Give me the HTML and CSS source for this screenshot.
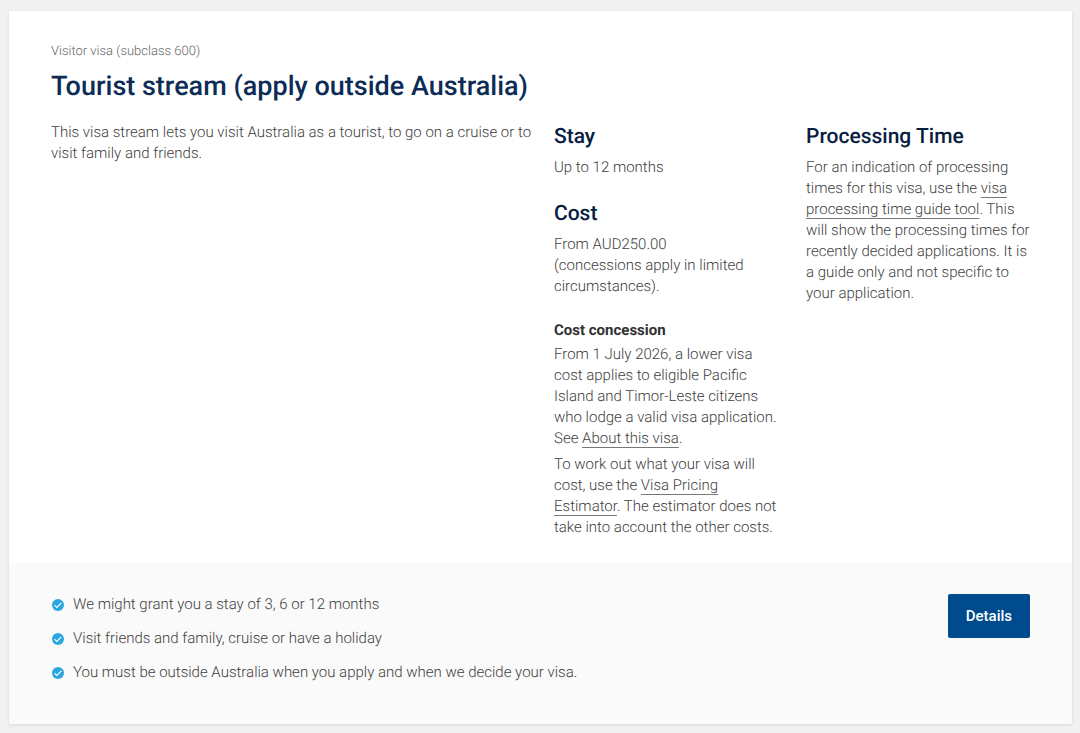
FILE: index.html
```html
<!DOCTYPE html>
<html lang="en">
<head>
    <meta charset="UTF-8">
    <meta name="viewport" content="width=device-width, initial-scale=1.0">
    <title>Visitor visa (subclass 600)</title>
    <link rel="stylesheet" href="styles.css">
</head>
<body>
    <!-- Shared tick icon -->
    <svg class="sprite" width="0" height="0" aria-hidden="true">
        <symbol id="tick" viewBox="0 0 12 12">
            <circle cx="6" cy="6" r="6" fill="#2ba6de"/>
            <path d="M2.5 6.2 L4.8 8.4 L9.4 3.8" fill="none" stroke="#fff" stroke-width="1.1"/>
        </symbol>
    </svg>

    <main class="visa-card">
        <div class="visa-main">
            <p class="visa-type">Visitor visa (subclass 600)</p>
            <h1>Tourist stream (apply outside Australia)</h1>

            <div class="visa-columns">
                <p class="visa-intro">This visa stream lets you visit Australia as a tourist, to go on a cruise or to visit family and friends.</p>

                <div class="visa-info">
                    <section>
                        <h2>Stay</h2>
                        <p>Up to 12 months</p>
                    </section>
                    <section>
                        <h2>Cost</h2>
                        <p>From AUD250.00<br>(concessions apply in limited circumstances).</p>
                        <h3>Cost concession</h3>
                        <p>From 1 July 2026, a lower visa cost applies to eligible Pacific Island and Timor-Leste citizens who lodge a valid visa application. See <a href="#">About this visa</a>.</p>
                        <p>To work out what your visa will cost, use the <a href="#">Visa Pricing Estimator</a>. The estimator does not take into account the other costs.</p>
                    </section>
                </div>

                <div class="visa-info">
                    <section>
                        <h2>Processing Time</h2>
                        <p>For an indication of processing times for this visa, use the <a href="#">visa processing time guide tool</a>. This will show the processing times for recently decided applications. It is a guide only and not specific to your application.</p>
                    </section>
                </div>
            </div>
        </div>

        <div class="visa-footer">
            <ul class="visa-points">
                <li><svg class="tick"><use href="#tick"/></svg>We might grant you a stay of 3, 6 or 12 months</li>
                <li><svg class="tick"><use href="#tick"/></svg>Visit friends and family, cruise or have a holiday</li>
                <li><svg class="tick"><use href="#tick"/></svg>You must be outside Australia when you apply and when we decide your visa.</li>
            </ul>
            <button type="button" class="details-button">Details</button>
        </div>
    </main>
</body>
</html>
```
FILE: styles.css
```css
body {
    margin: 0;
    padding: 11px 8px 9px 9px;
    font-family: Roboto, "Liberation Sans", sans-serif;
    font-size: 15px;
    font-weight: 300;
    line-height: 21px;
    text-rendering: geometricPrecision;
    color: #404040;
    background-color: #f1f1f1;
}

p {
    margin: 0;
}

.sprite {
    position: absolute;
}

.visa-card {
    background-color: #ffffff;
    box-shadow: 0 1px 3px rgba(0, 0, 0, 0.1);
}

.visa-main {
    padding: 30px 38px 25px 42px;
}

.visa-type {
    font-size: 13px;
    color: #666666;
}

h1 {
    margin: 8px 0 20px;
    font-size: 27px;
    font-weight: 500;
    line-height: 32px;
    color: #0c2c56;
}

.visa-columns {
    display: grid;
    grid-template-columns: 481fr 230fr 228fr;
    column-gap: 22px;
}

.visa-info {
    padding-right: 3px;
}

.visa-info h2 {
    margin: 0 0 6px;
    padding-top: 1px;
    font-size: 21px;
    font-weight: 500;
    line-height: 28px;
    color: #08203f;
}

.visa-info section + section {
    margin-top: 21px;
}

.visa-info h3 {
    margin: 23px 0 3px;
    font-size: 15px;
    font-weight: 700;
    line-height: 21px;
    color: #313131;
}

.visa-info p + p {
    margin-top: 5px;
}

a {
    color: inherit;
    text-decoration: underline 1px #777777;
    text-decoration-skip-ink: none;
    text-underline-offset: 4px;
}

.visa-footer {
    display: flex;
    justify-content: space-between;
    align-items: flex-start;
    padding: 31px 42px 28px;
    background-color: #fafafa;
}

.visa-points {
    margin: 0;
    padding: 0 0 0 1px;
    list-style: none;
}

.visa-points li {
    display: flex;
    align-items: center;
    gap: 9px;
    margin-bottom: 13px;
}

.tick {
    flex: none;
    width: 12px;
    height: 12px;
}

.details-button {
    padding: 11px 18px;
    border: 0;
    border-radius: 2px;
    font-family: inherit;
    font-size: 15px;
    font-weight: 500;
    line-height: 22px;
    color: #ffffff;
    background-color: #004b8d;
    cursor: pointer;
}
```
